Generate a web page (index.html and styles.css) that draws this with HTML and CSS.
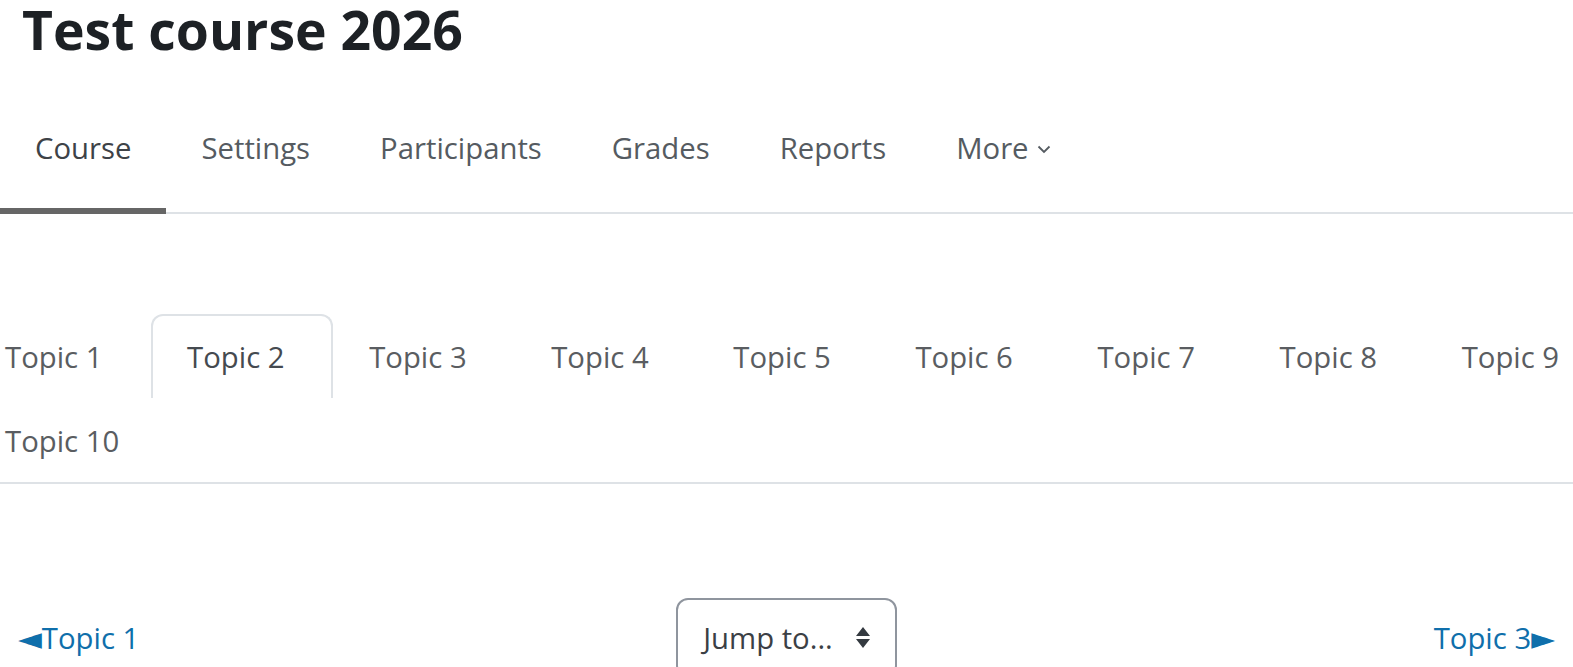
FILE: index.html
```html
<!DOCTYPE html>
<html lang="en">
<head>
<meta charset="utf-8">
<title>Test course 2026</title>
<link rel="stylesheet" href="styles.css">
</head>
<body>
<header class="page-header">
  <h1 class="page-title">Test course 2026</h1>
</header>
<nav class="secondary-nav">
  <a class="nav-link active" href="#">Course</a>
  <a class="nav-link" href="#">Settings</a>
  <a class="nav-link" href="#">Participants</a>
  <a class="nav-link" href="#">Grades</a>
  <a class="nav-link" href="#">Reports</a>
  <a class="nav-link" href="#">More <svg class="chev" width="14" height="9" viewBox="0 0 14 9" aria-hidden="true"><path d="M1.5 1.5 L7 7 L12.5 1.5" fill="none" stroke="currentColor" stroke-width="1.8"/></svg></a>
</nav>
<main class="course-content">
  <ul class="topic-tabs">
    <li class="topic-tab"><a href="#">Topic 1</a></li>
    <li class="topic-tab active"><a href="#">Topic 2</a></li>
    <li class="topic-tab"><a href="#">Topic 3</a></li>
    <li class="topic-tab"><a href="#">Topic 4</a></li>
    <li class="topic-tab"><a href="#">Topic 5</a></li>
    <li class="topic-tab"><a href="#">Topic 6</a></li>
    <li class="topic-tab"><a href="#">Topic 7</a></li>
    <li class="topic-tab"><a href="#">Topic 8</a></li>
    <li class="topic-tab"><a href="#">Topic 9</a></li>
    <li class="topic-tab"><a href="#">Topic 10</a></li>
  </ul>
  <div class="section-nav">
    <a class="section-link prev" href="#"><span class="arrow">◄</span>Topic 1</a>
    <div class="jump-select">
      <span>Jump to...</span>
      <svg class="updown" width="16" height="24" viewBox="0 0 16 24" aria-hidden="true"><path d="M8 1 L15 10 L1 10 Z M1 13 L15 13 L8 22 Z" fill="#343a40"/></svg>
    </div>
    <a class="section-link next" href="#">Topic 3<span class="arrow">►</span></a>
  </div>
</main>
</body>
</html>
```
FILE: styles.css
```css
html, body {
  margin: 0;
  padding: 0;
  overflow-x: hidden;
  background: #fff;
}
body {
  font-family: "Open Sans", "Noto Sans", sans-serif;
  color: #1d2125;
}
a {
  text-decoration: none;
}
.page-header {
  padding-left: 22px;
}
.page-title {
  margin: 0;
  font-size: 53.5px;
  line-height: 60px;
  font-weight: 700;
  color: #1d2125;
}
.secondary-nav {
  display: flex;
  border-bottom: 2px solid #dee2e6;
  font-size: 29.3px;
  line-height: 48px;
}
.nav-link {
  padding: 64px 35px 36px;
  color: #555b61;
  border-bottom: 6px solid transparent;
  margin-bottom: -2px;
  display: flex;
  align-items: center;
  gap: 8px;
}
.nav-link.active {
  border-bottom-color: #666;
  color: #3d4247;
}
.chev {
  margin-top: 2px;
}
.course-content {
  padding-top: 100px;
}
.topic-tabs {
  list-style: none;
  margin: 0 -40px 0 -31px;
  padding: 0;
  display: flex;
  flex-wrap: wrap;
  border-bottom: 2px solid #dee2e6;
  font-size: 29.3px;
  line-height: 48px;
}
.topic-tab a {
  display: block;
  padding: 17px 46.6px 17px 34px;
  border: 2px solid transparent;
  border-bottom: 0;
  border-radius: 12px 12px 0 0;
  color: #5a5d61;
}
.topic-tab.active a {
  border-color: #dee2e6;
  color: #454a50;
}
.section-nav {
  margin-top: 114px;
  display: flex;
  justify-content: space-between;
  align-items: baseline;
  padding: 0 18px;
  font-size: 29.3px;
  line-height: 48px;
}
.section-link {
  color: #0f6fab;
}
.arrow {
  font-family: "DejaVu Sans", sans-serif;
  font-size: 31px;
  line-height: 1;
}
.jump-select {
  display: flex;
  align-items: center;
  gap: 22px;
  padding: 14px 24px 14px 25px;
  border: 2px solid #8f959e;
  border-radius: 12px;
  color: #3b4045;
}
.updown {
  display: block;
}
```
